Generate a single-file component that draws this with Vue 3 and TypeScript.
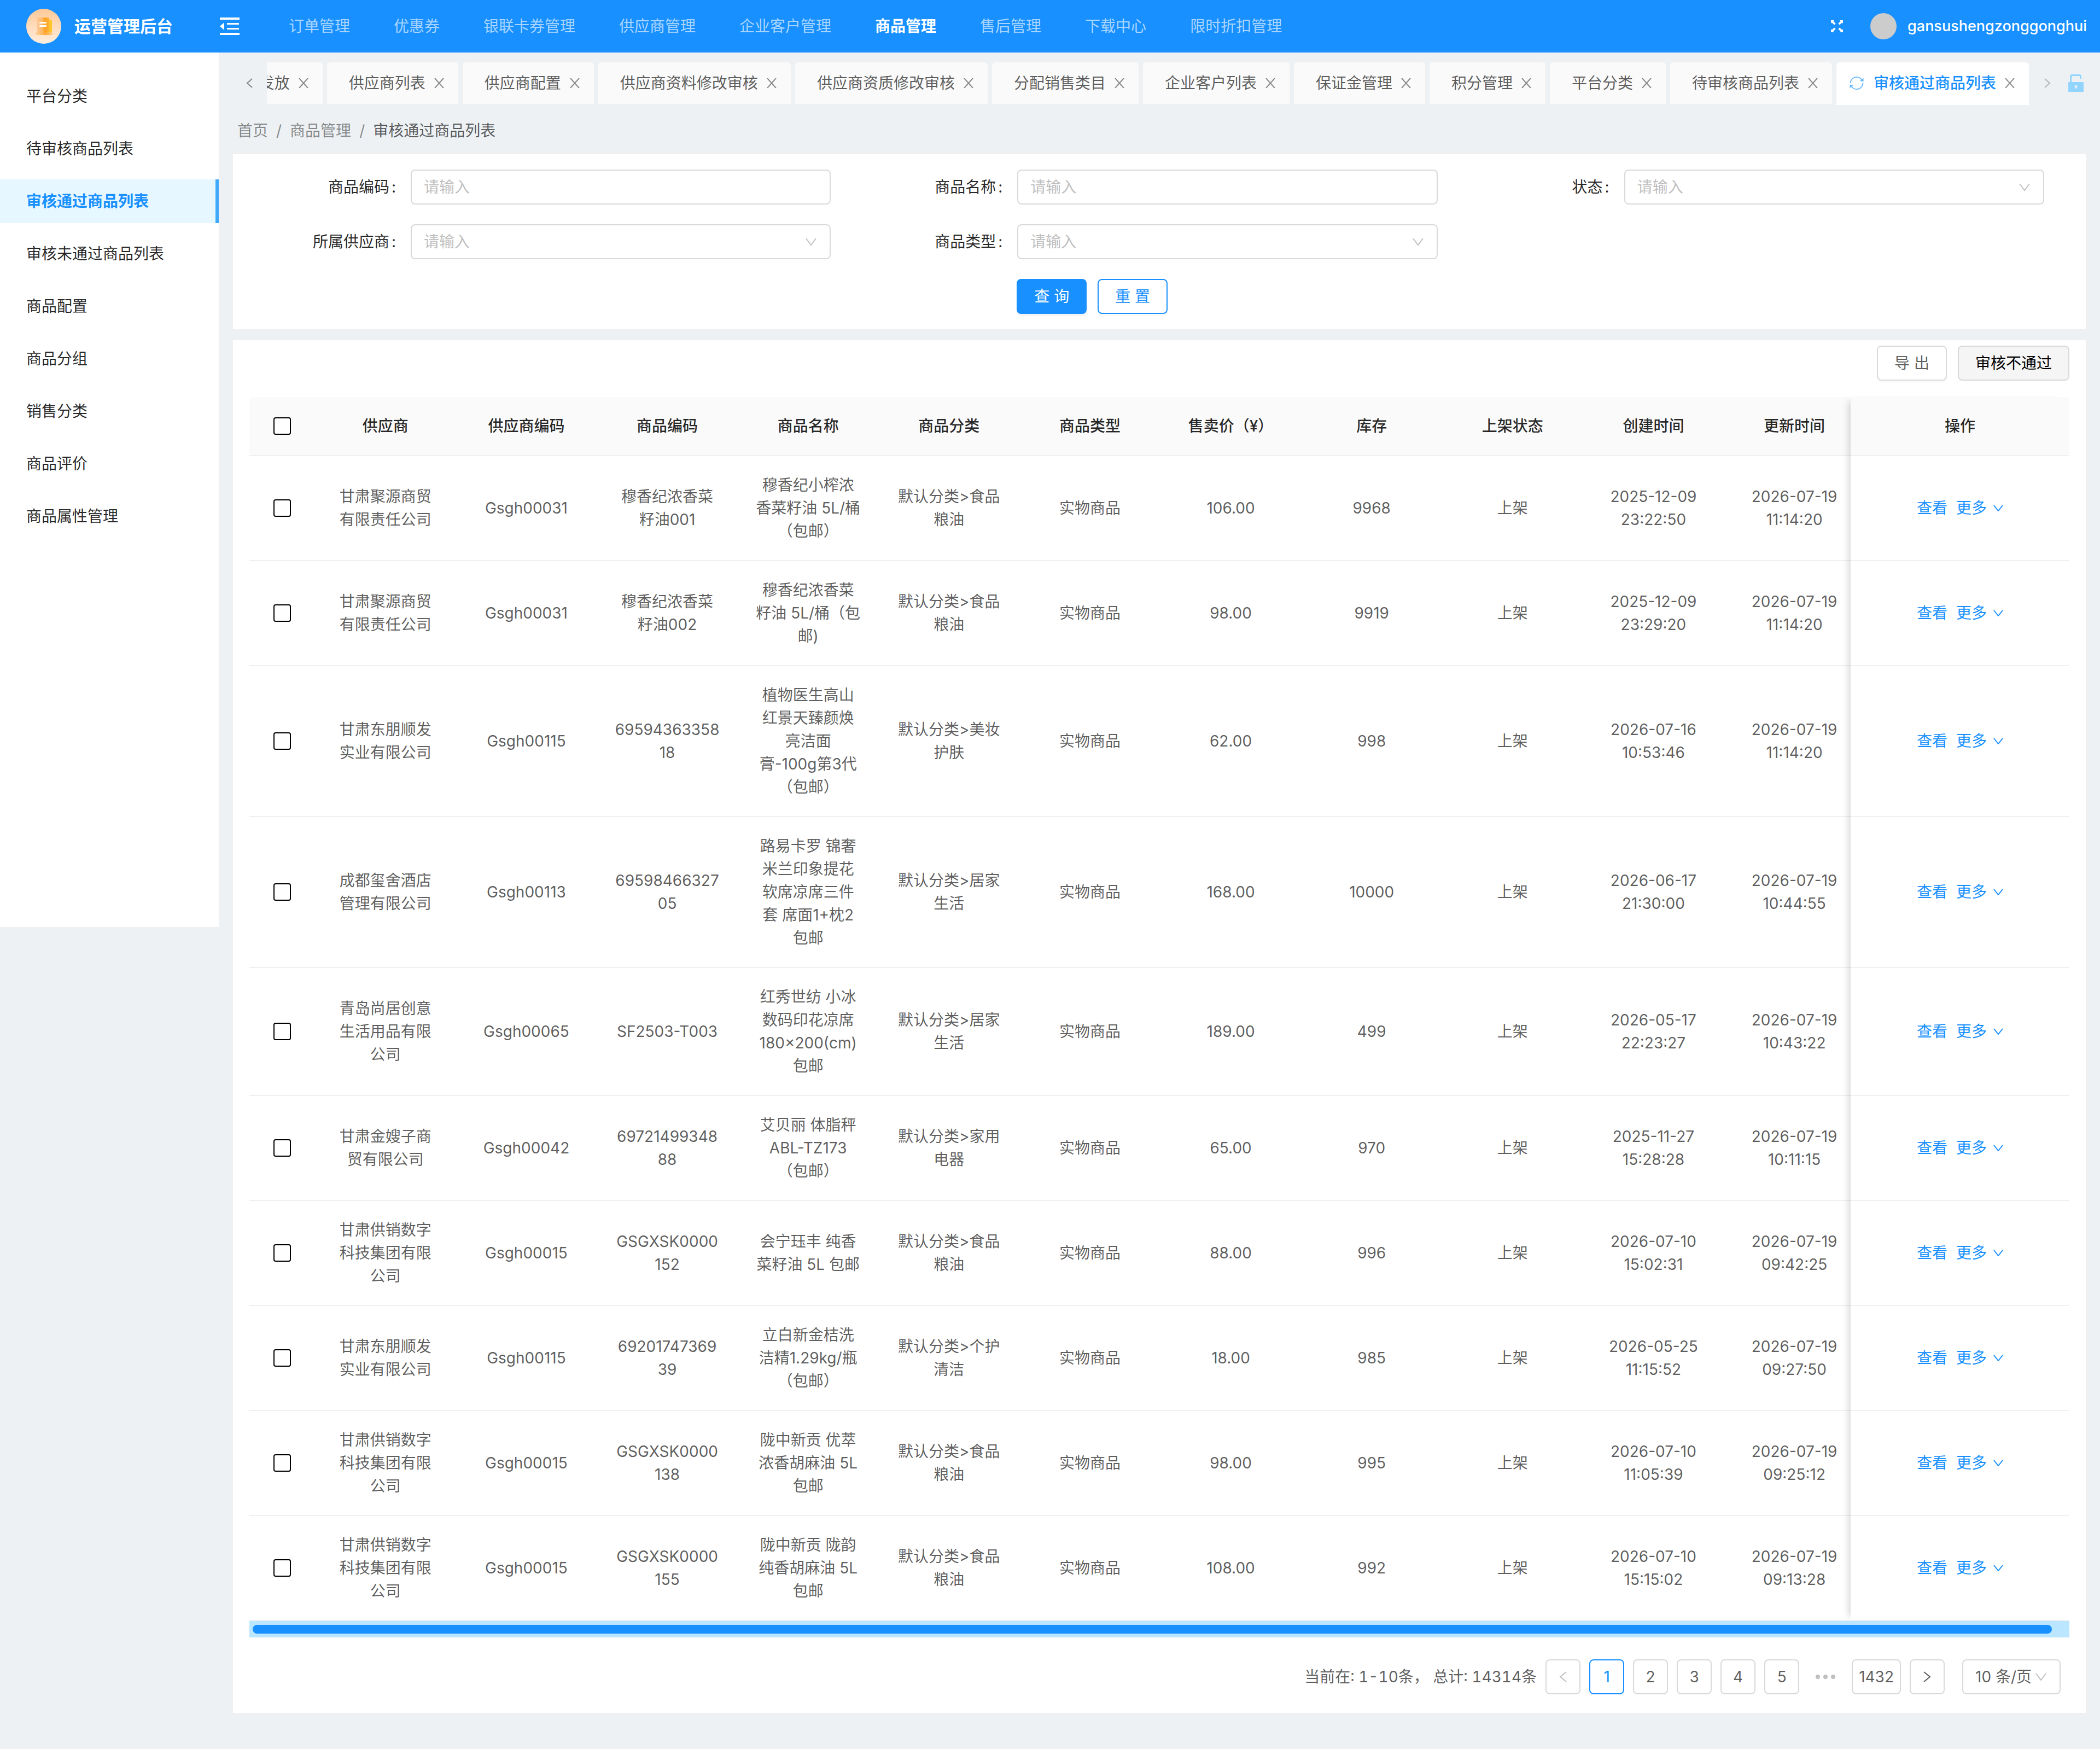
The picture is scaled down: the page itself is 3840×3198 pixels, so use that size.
<script setup lang="ts">
import { ref } from 'vue'

interface Product {
  supplier: string
  supplierCode: string
  code: string
  name: string
  category: string
  price: string
  stock: string
  created: string
  updated: string
}

interface Field {
  id: string
  label: string
  kind: 'text' | 'select'
}

const navItems: string[] = [
  '订单管理', '优惠券', '银联卡券管理', '供应商管理', '企业客户管理',
  '商品管理', '售后管理', '下载中心', '限时折扣管理',
]
const activeNav = ref('商品管理')

const sideItems: string[] = [
  '平台分类', '待审核商品列表', '审核通过商品列表', '审核未通过商品列表',
  '商品配置', '商品分组', '销售分类', '商品评价', '商品属性管理',
]
const activeSide = ref('审核通过商品列表')

const tabs: string[] = [
  '发放', '供应商列表', '供应商配置', '供应商资料修改审核', '供应商资质修改审核',
  '分配销售类目', '企业客户列表', '保证金管理', '积分管理', '平台分类',
  '待审核商品列表', '审核通过商品列表',
]
const activeTab = ref('审核通过商品列表')

const fields: Field[] = [
  { id: 'code', label: '商品编码', kind: 'text' },
  { id: 'name', label: '商品名称', kind: 'text' },
  { id: 'status', label: '状态', kind: 'select' },
  { id: 'supplier', label: '所属供应商', kind: 'select' },
  { id: 'type', label: '商品类型', kind: 'select' },
]

const columns: string[] = [
  '供应商', '供应商编码', '商品编码', '商品名称', '商品分类', '商品类型',
  '售卖价（¥）', '库存', '上架状态', '创建时间', '更新时间',
]

const products: Product[] = [
  { supplier: '甘肃聚源商贸有限责任公司', supplierCode: 'Gsgh00031', code: '穆香纪浓香菜籽油001', name: '穆香纪小榨浓香菜籽油 5L/桶（包邮）', category: '默认分类>食品粮油', price: '106.00', stock: '9968', created: '2025-12-09 23:22:50', updated: '2026-07-19 11:14:20' },
  { supplier: '甘肃聚源商贸有限责任公司', supplierCode: 'Gsgh00031', code: '穆香纪浓香菜籽油002', name: '穆香纪浓香菜籽油 5L/桶（包邮)', category: '默认分类>食品粮油', price: '98.00', stock: '9919', created: '2025-12-09 23:29:20', updated: '2026-07-19 11:14:20' },
  { supplier: '甘肃东朋顺发实业有限公司', supplierCode: 'Gsgh00115', code: '6959436335818', name: '植物医生高山红景天臻颜焕亮洁面膏\u2060-100g\u2060第3代（包邮）', category: '默认分类>美妆护肤', price: '62.00', stock: '998', created: '2026-07-16 10:53:46', updated: '2026-07-19 11:14:20' },
  { supplier: '成都玺舍酒店管理有限公司', supplierCode: 'Gsgh00113', code: '6959846632705', name: '路易卡罗 锦奢米兰印象提花软席凉席三件套 席面1+枕2 包邮', category: '默认分类>居家生活', price: '168.00', stock: '10000', created: '2026-06-17 21:30:00', updated: '2026-07-19 10:44:55' },
  { supplier: '青岛尚居创意生活用品有限公司', supplierCode: 'Gsgh00065', code: 'SF2503-T003', name: '红秀世纺 小冰数码印花凉席180×200(cm) 包邮', category: '默认分类>居家生活', price: '189.00', stock: '499', created: '2026-05-17 22:23:27', updated: '2026-07-19 10:43:22' },
  { supplier: '甘肃金嫂子商贸有限公司', supplierCode: 'Gsgh00042', code: '6972149934888', name: '艾贝丽 体脂秤 ABL-TZ173（包邮）', category: '默认分类>家用电器', price: '65.00', stock: '970', created: '2025-11-27 15:28:28', updated: '2026-07-19 10:11:15' },
  { supplier: '甘肃供销数字科技集团有限公司', supplierCode: 'Gsgh00015', code: 'GSGXSK0000152', name: '会宁珏丰 纯香菜籽油 5L 包邮', category: '默认分类>食品粮油', price: '88.00', stock: '996', created: '2026-07-10 15:02:31', updated: '2026-07-19 09:42:25' },
  { supplier: '甘肃东朋顺发实业有限公司', supplierCode: 'Gsgh00115', code: '6920174736939', name: '立白新金桔洗洁精1.29kg/瓶（包邮）', category: '默认分类>个护清洁', price: '18.00', stock: '985', created: '2026-05-25 11:15:52', updated: '2026-07-19 09:27:50' },
  { supplier: '甘肃供销数字科技集团有限公司', supplierCode: 'Gsgh00015', code: 'GSGXSK0000138', name: '陇中新贡 优萃浓香胡麻油 5L 包邮', category: '默认分类>食品粮油', price: '98.00', stock: '995', created: '2026-07-10 11:05:39', updated: '2026-07-19 09:25:12' },
  { supplier: '甘肃供销数字科技集团有限公司', supplierCode: 'Gsgh00015', code: 'GSGXSK0000155', name: '陇中新贡 陇韵纯香胡麻油 5L 包邮', category: '默认分类>食品粮油', price: '108.00', stock: '992', created: '2026-07-10 15:15:02', updated: '2026-07-19 09:13:28' },
]

const CODE_LINE = 11

function codeParts(code: string): string[] {
  return /^\d{12,}$/.test(code) ? [code.slice(0, CODE_LINE), code.slice(CODE_LINE)] : [code]
}

const pages: number[] = [1, 2, 3, 4, 5]
const currentPage = ref(1)
</script>

<template>
  <div class="app">
    <header class="topbar">
      <div class="brand">
        <svg class="logo" viewBox="0 0 64 64" aria-hidden="true">
          <defs>
            <linearGradient id="disc" x1="0" y1="0" x2="0" y2="1">
              <stop offset="0" stop-color="#ffc999" />
              <stop offset="1" stop-color="#ffeedd" />
            </linearGradient>
            <linearGradient id="page" x1="0" y1="0" x2="1" y2="0">
              <stop offset="0" stop-color="#ffc793" />
              <stop offset="0.4" stop-color="#ffbb6a" />
              <stop offset="0.65" stop-color="#ffa31f" />
              <stop offset="1" stop-color="#ffb23c" />
            </linearGradient>
            <linearGradient id="foot" x1="0" y1="0" x2="1" y2="0">
              <stop offset="0" stop-color="#ffd0a0" />
              <stop offset="0.4" stop-color="#ffb95e" />
              <stop offset="0.6" stop-color="#ffab35" />
              <stop offset="1" stop-color="#ffd08c" />
            </linearGradient>
          </defs>
          <circle cx="32" cy="32" r="32" fill="url(#disc)" />
          <rect x="34" y="20" width="13" height="27" rx="2" fill="#ffc629" />
          <rect x="20" y="16" width="22" height="29" rx="1" fill="url(#page)" />
          <rect x="17" y="43" width="31" height="5" rx="2" fill="url(#foot)" />
          <rect x="24" y="24" width="13" height="3" rx="1" fill="#fff" />
          <rect x="24" y="30" width="13" height="3" rx="1" fill="#fff" />
        </svg>
        <h1 class="title">运营管理后台</h1>
      </div>
      <button class="icon-button fold" type="button" aria-label="收起菜单">
        <svg viewBox="0 0 36 32" width="36" height="32" fill="currentColor" aria-hidden="true">
          <path d="M0 0h36v4H0zM13 10h22v3H13zM13 19h22v3H13zM0 28h36v4H0zM0 16l7-6q1 0 1 1v10q0 1-1 1z" />
        </svg>
      </button>
      <nav class="nav">
        <a
          v-for="item in navItems"
          :key="item"
          href="#"
          :class="['nav-link', { active: item === activeNav }]"
          @click.prevent="activeNav = item"
        >{{ item }}</a>
      </nav>
      <div class="user">
        <button class="icon-button" type="button" aria-label="全屏">
          <svg viewBox="0 0 22 22" width="22" height="22" fill="currentColor" aria-hidden="true">
            <path d="M0 0h6L4.300 1.700 8.700 6 6 8.500 1.700 4.200 0 6z" />
            <path d="M22 0h-6l1.700 1.700L13.300 6 16 8.500l4.300-4.300L22 6z" />
            <path d="M0 22h6l-1.700-1.700L8.700 16 6 13.500l-4.300 4.300L0 16z" />
            <path d="M22 22h-6l1.700-1.700-4.400-4.300 2.700-2.500 4.300 4.300L22 16z" />
          </svg>
        </button>
        <span class="avatar"></span>
        <span class="username">gansushengzonggonghui</span>
      </div>
    </header>

    <div class="body">
      <aside class="sidebar">
        <a
          v-for="item in sideItems"
          :key="item"
          href="#"
          :class="['side-link', { active: item === activeSide }]"
          @click.prevent="activeSide = item"
        >{{ item }}</a>
      </aside>

      <main class="content">
        <div class="tabbar">
          <button class="tab-arrow" type="button" aria-label="向左滚动">
            <svg viewBox="0 0 12 18" width="12" height="18" aria-hidden="true"><path d="M11 1L2 9l9 8" fill="none" stroke="currentColor" stroke-width="2" /></svg>
          </button>
          <div class="tabs">
            <div v-for="tab in tabs" :key="tab" :class="['tab', { active: tab === activeTab }]">
              <svg v-if="tab === activeTab" class="sync" viewBox="0 0 26 26" width="26" height="26" aria-hidden="true">
                <path d="M1.500 13A11.500 11.500 0 0 1 22.500 7M24.500 13A11.500 11.500 0 0 1 3.500 19" fill="none" stroke="currentColor" stroke-width="2" />
                <path d="M25.500 4v6.500L19 9zM.5 22v-6.500L7 17z" fill="currentColor" />
              </svg>
              <button class="tab-name" type="button" @click="activeTab = tab">{{ tab }}</button>
              <button class="tab-close" type="button" :aria-label="`关闭${tab}`">
                <svg viewBox="0 0 18 18" width="18" height="18" aria-hidden="true"><path d="M1 0l16 18M17 0L1 18" fill="none" stroke="currentColor" stroke-width="2" /></svg>
              </button>
            </div>
          </div>
          <button class="tab-arrow right" type="button" aria-label="向右滚动">
            <svg viewBox="0 0 12 18" width="12" height="18" aria-hidden="true"><path d="M1 1l9 8-9 8" fill="none" stroke="currentColor" stroke-width="2" /></svg>
          </button>
          <button class="tab-lock" type="button" aria-label="锁定标签">
            <svg viewBox="0 0 30 32" width="30" height="32" aria-hidden="true">
              <path d="M5.500 14V4q0-2.500 2.500-2.500h13q2.500 0 2.500 2.500v4" fill="none" stroke="currentColor" stroke-width="3" />
              <path fill-rule="evenodd" d="M2 14h26q1 0 1 1v16q0 1-1 1H2q-1 0-1-1V15q0-1 1-1zM15 20a2 2 0 0 0-1 4v2h2v-2a2 2 0 0 0-1-4z" fill="currentColor" />
            </svg>
          </button>
        </div>

        <nav class="breadcrumb" aria-label="面包屑">
          <a href="#">首页</a><span class="slash">/</span><a href="#">商品管理</a><span class="slash">/</span><span class="here">审核通过商品列表</span>
        </nav>

        <section class="card">
          <form class="search" @submit.prevent>
            <div class="fields">
              <div v-for="field in fields" :key="field.id" class="field">
                <label :for="field.id">{{ field.label }}<span class="colon">:</span></label>
                <input v-if="field.kind === 'text'" :id="field.id" class="control" type="text" placeholder="请输入" />
                <div v-else class="select-wrap">
                  <select :id="field.id" class="control placeholder">
                    <option value="">请输入</option>
                  </select>
                  <svg class="chevron" viewBox="0 0 20 14" width="20" height="14" aria-hidden="true"><path d="M1 1l9 12 9-12" fill="none" stroke="currentColor" stroke-width="2" /></svg>
                </div>
              </div>
            </div>
            <div class="actions">
              <div class="action-buttons">
                <button class="btn primary" type="submit">查 询</button>
                <button class="btn ghost" type="reset">重 置</button>
              </div>
            </div>
          </form>
        </section>

        <section class="card list">
          <div class="toolbar">
            <button class="btn" type="button">导 出</button>
            <button class="btn grey" type="button">审核不通过</button>
          </div>

          <div class="table-frame">
            <div class="table-scroll">
              <table>
                <colgroup>
                  <col class="col-check" />
                  <col v-for="column in columns" :key="column" class="col-data" />
                  <col class="col-action" />
                </colgroup>
                <thead>
                  <tr>
                    <th><input class="check" type="checkbox" aria-label="全选" /></th>
                    <th v-for="column in columns" :key="column">{{ column }}</th>
                    <th class="fixed">操作</th>
                  </tr>
                </thead>
                <tbody>
                  <tr v-for="(row, index) in products" :key="index">
                    <td><input class="check" type="checkbox" :aria-label="`选择${row.name}`" /></td>
                    <td>{{ row.supplier }}</td>
                    <td>{{ row.supplierCode }}</td>
                    <td><template v-for="(part, i) in codeParts(row.code)" :key="i"><wbr v-if="i > 0" />{{ part }}</template></td>
                    <td>{{ row.name }}</td>
                    <td>{{ row.category }}</td>
                    <td>实物商品</td>
                    <td>{{ row.price }}</td>
                    <td>{{ row.stock }}</td>
                    <td>上架</td>
                    <td>{{ row.created }}</td>
                    <td>{{ row.updated }}</td>
                    <td class="fixed">
                      <div class="row-actions">
                        <a href="#">查看</a>
                        <a href="#" class="more">更多
                          <svg viewBox="0 0 18 12" width="18" height="12" aria-hidden="true"><path d="M1 1l8 10 8-10" fill="none" stroke="currentColor" stroke-width="2" /></svg>
                        </a>
                      </div>
                    </td>
                  </tr>
                </tbody>
              </table>
            </div>
            <div class="fixed-shadow" aria-hidden="true"></div>
          </div>
          <div class="scrollbar"><div class="thumb"></div></div>

          <nav class="pagination" aria-label="分页">
            <span class="total">当前在: 1-10条， 总计: 14314条</span>
            <button class="page" type="button" disabled aria-label="上一页">
              <svg viewBox="0 0 14 22" width="14" height="22" aria-hidden="true"><path d="M13 2L2 11l11 9" fill="none" stroke="currentColor" stroke-width="2" /></svg>
            </button>
            <button
              v-for="page in pages"
              :key="page"
              type="button"
              :class="['page', { active: page === currentPage }]"
              @click="currentPage = page"
            >{{ page }}</button>
            <span class="dots"><i></i><i></i><i></i></span>
            <button class="page" type="button">1432</button>
            <button class="page" type="button" aria-label="下一页">
              <svg viewBox="0 0 14 22" width="14" height="22" aria-hidden="true"><path d="M1 2l11 9-11 9" fill="none" stroke="currentColor" stroke-width="2" /></svg>
            </button>
            <div class="select-wrap size">
              <select class="control" aria-label="每页条数">
                <option>10 条/页</option>
              </select>
              <svg class="chevron" viewBox="0 0 20 14" width="20" height="14" aria-hidden="true"><path d="M1 1l9 12 9-12" fill="none" stroke="currentColor" stroke-width="2" /></svg>
            </div>
          </nav>
        </section>
      </main>
    </div>
  </div>
</template>

<style>
body {
  background: #edf1f4;
}
</style>

<style scoped>
.app {
  min-height: 100vh;
  background: #edf1f4;
  color: rgba(0, 0, 0, 0.65);
  font-family: Inter, "Noto Sans CJK SC", sans-serif;
  font-size: 28px;
  line-height: 42px;
}
.app *,
.app *::before {
  box-sizing: border-box;
}
a {
  text-decoration: none;
  color: inherit;
}
button,
input,
select {
  font: inherit;
  color: inherit;
  margin: 0;
}
button {
  padding: 0;
  border: 0;
  background: none;
  cursor: pointer;
}
svg {
  display: block;
  flex: none;
}

/* Top bar */
.topbar {
  display: flex;
  align-items: center;
  height: 96px;
  background: #1890ff;
  color: #fff;
}
.brand {
  display: flex;
  align-items: center;
  gap: 24px;
  width: 400px;
  padding-left: 48px;
}
.logo {
  width: 64px;
  height: 64px;
}
.title {
  margin: 0;
  font-size: 30px;
  font-weight: 600;
}
.icon-button {
  display: flex;
  align-items: center;
}
.fold {
  margin: 0 90px 0 2px;
}
.nav {
  display: flex;
  gap: 80px;
  flex: 1;
}
.nav-link {
  color: rgba(255, 255, 255, 0.65);
  white-space: nowrap;
}
.nav-link.active {
  color: #fff;
  font-weight: 600;
}
.user {
  display: flex;
  align-items: center;
  padding-right: 24px;
}
.avatar {
  width: 48px;
  height: 48px;
  margin: 0 20px 0 50px;
  border-radius: 50%;
  background: #ccc;
}
.username {
  font-size: 27px;
  font-weight: 500;
}

/* Side menu */
.body {
  display: flex;
  align-items: flex-start;
}
.sidebar {
  flex: none;
  display: flex;
  flex-direction: column;
  gap: 16px;
  width: 400px;
  min-height: 50vh;
  padding-top: 40px;
  background: #fff;
}
.side-link {
  display: flex;
  align-items: center;
  height: 80px;
  padding-left: 48px;
  color: rgba(0, 0, 0, 0.85);
}
.side-link.active {
  border-right: 6px solid #40a9ff;
  background: #e6f7ff;
  color: #1890ff;
  font-weight: 600;
}

/* Page tabs */
.content {
  flex: 1;
  min-width: 0;
  padding: 16px 24px 62px;
}
.tabbar {
  display: flex;
  align-items: center;
}
.tab-arrow {
  display: flex;
  align-items: center;
  justify-content: center;
  width: 64px;
  height: 80px;
  color: rgba(0, 0, 0, 0.45);
}
.tab-arrow.right {
  color: rgba(0, 0, 0, 0.25);
}
.tabs {
  flex: 1;
  min-width: 0;
  display: flex;
  justify-content: flex-end;
  gap: 4px;
  overflow: hidden;
}
.tab {
  flex: none;
  display: flex;
  align-items: center;
  height: 80px;
  padding: 0 26px 0 40px;
  border: 2px solid #f0f0f0;
  border-radius: 8px 8px 0 0;
  background: #fafafa;
}
.tab.active {
  padding-left: 24px;
  border-bottom-color: #fff;
  background: #fff;
  color: #1890ff;
  font-weight: 500;
}
.sync {
  margin-right: 18px;
  color: #69b8ff;
}
.tab-name {
  white-space: nowrap;
}
.tab-close {
  display: flex;
  margin-left: 16px;
  color: rgba(0, 0, 0, 0.45);
}
.tab-lock {
  display: flex;
  align-items: center;
  justify-content: center;
  width: 40px;
  height: 80px;
  color: #91d5ff;
}

/* Breadcrumb */
.breadcrumb {
  display: flex;
  padding: 26px 0 20px 10px;
  color: rgba(0, 0, 0, 0.45);
}
.slash {
  margin: 0 15px;
}
.here {
  color: rgba(0, 0, 0, 0.65);
}

/* Search form */
.card {
  border: 2px solid #f0f0f0;
  background: #fff;
}
.search {
  padding: 28px 30px;
}
.fields {
  display: grid;
  grid-template-columns: repeat(3, 1fr);
  row-gap: 36px;
}
.field {
  display: flex;
  align-items: center;
  padding: 0 46px 0 18px;
}
.field label {
  flex: 0 0 277px;
  padding-right: 27px;
  text-align: right;
  color: rgba(0, 0, 0, 0.85);
}
.colon {
  margin-left: 4px;
}
.control {
  display: block;
  width: 100%;
  height: 64px;
  padding: 0 22px;
  border: 2px solid #d9d9d9;
  border-radius: 8px;
  background: #fff;
  appearance: none;
  outline: none;
}
.control::placeholder,
.control.placeholder {
  color: #bfbfbf;
  opacity: 1;
}
.select-wrap {
  position: relative;
  flex: 1;
}
.chevron {
  position: absolute;
  top: 25px;
  right: 26px;
  color: rgba(0, 0, 0, 0.25);
  pointer-events: none;
}
.actions {
  display: grid;
  grid-template-columns: repeat(3, 1fr);
  margin-top: 36px;
}
.action-buttons {
  grid-column: 2;
  display: flex;
  gap: 20px;
  padding-left: 294px;
}
.btn {
  height: 64px;
  padding: 0 30px;
  border: 2px solid #d9d9d9;
  border-radius: 8px;
  background: #fff;
  box-shadow: 0 4px 0 rgba(0, 0, 0, 0.016);
  white-space: nowrap;
}
.btn.primary {
  border-color: #1890ff;
  background: #1890ff;
  box-shadow: 0 4px 0 rgba(0, 0, 0, 0.043);
  color: #fff;
}
.btn.ghost {
  border-color: #1890ff;
  color: #1890ff;
}
.btn.grey {
  background: #f5f5f5;
  box-shadow: none;
  color: #000;
}

/* Product table */
.list {
  margin-top: 16px;
  padding: 10px 30px 34px;
}
.toolbar {
  display: flex;
  justify-content: flex-end;
  gap: 20px;
  margin-bottom: 30px;
}
.table-frame {
  position: relative;
}
.table-scroll {
  overflow-x: auto;
  scrollbar-width: none;
}
table {
  width: calc(100% + 26px);
  table-layout: fixed;
  border-collapse: separate;
  border-spacing: 0;
}
.col-check {
  width: 120px;
}
.col-action {
  width: 400px;
}
th,
td {
  padding: 32px;
  border-bottom: 2px solid #f0f0f0;
  text-align: center;
  overflow-wrap: anywhere;
}
th {
  background: #fafafa;
  color: rgba(0, 0, 0, 0.85);
  font-weight: 500;
  white-space: nowrap;
}
th:first-child {
  border-top-left-radius: 8px;
}
.fixed {
  position: sticky;
  right: 0;
  background: #fff;
}
th.fixed {
  background: #fafafa;
}
.fixed-shadow {
  position: absolute;
  top: 0;
  right: 0;
  bottom: 0;
  width: 400px;
  box-shadow: -12px 0 12px -8px rgba(0, 0, 0, 0.15);
  pointer-events: none;
}
.check {
  display: block;
  width: 32px;
  height: 32px;
  margin: 0 auto;
  border: 2px solid #000;
  border-radius: 4px;
  background: #fff;
  appearance: none;
}
.row-actions {
  display: flex;
  justify-content: center;
  gap: 16px;
  color: #1890ff;
}
.more {
  display: flex;
  align-items: center;
  gap: 12px;
}
.scrollbar {
  padding: 7px 32px 7px 6px;
  background: #bae7ff;
}
.thumb {
  height: 16px;
  border-radius: 8px;
  background: #1890ff;
}

/* Pagination */
.pagination {
  display: flex;
  align-items: center;
  justify-content: flex-end;
  gap: 16px;
  padding: 40px 16px 0 0;
}
.total {
  font-variant-numeric: tabular-nums;
}
.page {
  display: flex;
  align-items: center;
  justify-content: center;
  min-width: 64px;
  height: 64px;
  padding: 0 11px;
  border: 2px solid #d9d9d9;
  border-radius: 8px;
  background: #fff;
}
.page:disabled {
  color: rgba(0, 0, 0, 0.25);
}
.page.active {
  border-color: #1890ff;
  color: #1890ff;
}
.dots {
  display: flex;
  justify-content: center;
  gap: 6px;
  width: 64px;
}
.dots i {
  width: 8px;
  height: 8px;
  border-radius: 50%;
  background: rgba(0, 0, 0, 0.25);
}
.size {
  flex: none;
  width: 180px;
  margin-left: 16px;
}
.size .control {
  padding-right: 0;
}
</style>
